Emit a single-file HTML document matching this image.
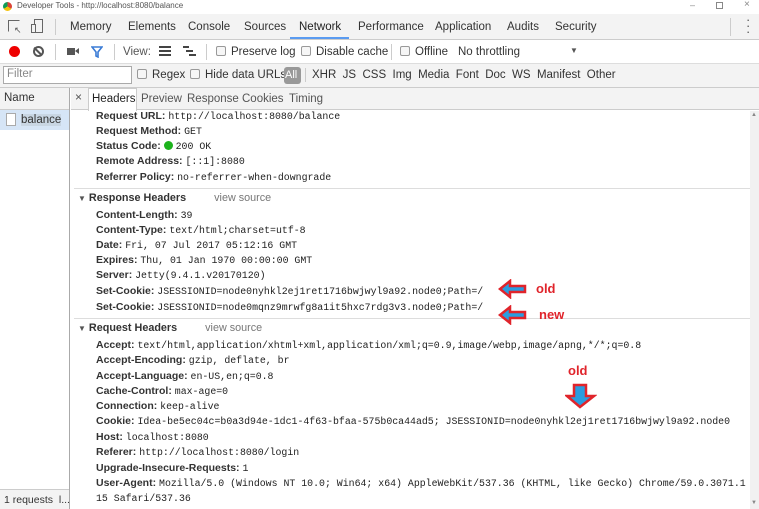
<!DOCTYPE html>
<html><head><meta charset="utf-8"><style>
*{margin:0;padding:0;box-sizing:border-box}
body{width:759px;height:509px;overflow:hidden;background:#fff;font-family:"Liberation Sans",sans-serif;font-size:11px;color:#333;position:relative}
.a{position:absolute;white-space:nowrap}
.bar{position:absolute;left:0;width:759px}
.t{color:#333;font-size:11.5px}
.cb{display:inline-block;width:10px;height:10px;border:1px solid #999;border-radius:2px;background:#f6f6f6;vertical-align:-1px;margin-right:5px}
.l{position:absolute;left:96px;white-space:nowrap;font-size:10.5px;color:#222}
.l b{font-weight:bold;color:#333}
.l span{font-family:"Liberation Mono",monospace;font-size:9.9px;color:#222}
.sec{position:absolute;left:78px;font-weight:bold;font-size:10.8px;color:#333;white-space:nowrap}
.vs{font-weight:normal;color:#777;margin-left:28px}
.hr{position:absolute;left:74px;width:676px;height:1px;background:#ddd}
.red{color:#e0242b;font-weight:bold;font-size:13px;font-family:"Liberation Sans",sans-serif}
</style></head><body>
<div class="bar" style="top:0;height:14px;background:#fff"></div>
<div class="a" style="left:3px;top:2px;width:9px;height:9px;border-radius:50%;background:conic-gradient(#db4437 0 120deg,#f4c20d 0 240deg,#0f9d58 0);"></div>
<div class="a" style="left:17px;top:1px;font-size:8px;color:#555">Developer Tools - http://localhost:8080/balance</div>
<div class="a" style="left:690px;top:0;font-size:9px;color:#888">&#8211;</div>
<div class="a" style="left:716px;top:2px;width:7px;height:7px;border:1px solid #888"></div>
<div class="a" style="left:744px;top:-1px;font-size:10px;color:#888">×</div>
<div class="bar" style="top:14px;height:26px;background:#f3f3f3;border-bottom:1px solid #ccc"></div>
<div class="a" style="left:8px;top:20px;width:12px;height:12px;border:1px solid #666;border-right-color:transparent;border-bottom-color:transparent"></div>
<div class="a" style="left:14px;top:25px;font-size:9px;color:#555">↖</div>
<div class="a" style="left:34px;top:19px;width:9px;height:14px;border:1px solid #666"></div>
<div class="a" style="left:31px;top:24px;width:5px;height:9px;border:1px solid #666;background:#f3f3f3"></div>
<div class="a" style="left:55px;top:19px;width:1px;height:16px;background:#ccc"></div>
<div class="a t" style="left:70px;top:21px">Memory</div>
<div class="a t" style="left:128px;top:21px">Elements</div>
<div class="a t" style="left:188px;top:21px">Console</div>
<div class="a t" style="left:244px;top:21px">Sources</div>
<div class="a t" style="left:299px;top:21px;color:#222">Network</div>
<div class="a" style="left:290px;top:37px;width:59px;height:2px;background:#5a9bf0"></div>
<div class="a t" style="left:358px;top:21px">Performance</div>
<div class="a t" style="left:435px;top:21px">Application</div>
<div class="a t" style="left:507px;top:21px">Audits</div>
<div class="a t" style="left:555px;top:21px">Security</div>
<div class="a" style="left:730px;top:18px;width:1px;height:18px;background:#ccc"></div>
<div class="a" style="left:746px;top:17px;font-size:13px;color:#555;line-height:6px">·<br>·<br>·</div>
<div class="bar" style="top:40px;height:24px;background:#fff;border-bottom:1px solid #ddd"></div>
<div class="a" style="left:9px;top:46px;width:11px;height:11px;border-radius:50%;background:#e00"></div>
<div class="a" style="left:33px;top:46px;width:11px;height:11px;border-radius:50%;border:2px solid #555"></div>
<div class="a" style="left:37px;top:46px;width:2px;height:11px;background:#555;transform:rotate(-45deg)"></div>
<div class="a" style="left:55px;top:44px;width:1px;height:16px;background:#ccc"></div>
<div class="a" style="left:67px;top:48px;width:8px;height:7px;background:#555"></div>
<div class="a" style="left:75px;top:48px;width:0;height:0;border-top:3.5px solid transparent;border-bottom:3.5px solid transparent;border-right:4px solid #555"></div>
<svg class="a" style="left:91px;top:46px" width="12" height="12"><path d="M1 1h10L7 6v5L5 10V6z" fill="none" stroke="#3a7bd5" stroke-width="1.6"/></svg>
<div class="a" style="left:114px;top:44px;width:1px;height:16px;background:#ccc"></div>
<div class="a t" style="left:123px;top:46px;color:#555">View:</div>
<div class="a" style="left:159px;top:46px;width:12px;height:10px;background:repeating-linear-gradient(#444 0 2px,transparent 2px 4px)"></div>
<div class="a" style="left:183px;top:46px;width:13px;height:10px;background:linear-gradient(#444,#444) 0 0/6px 2px no-repeat,linear-gradient(#444,#444) 3px 4px/7px 2px no-repeat,linear-gradient(#444,#444) 6px 8px/7px 2px no-repeat"></div>
<div class="a" style="left:206px;top:44px;width:1px;height:16px;background:#ccc"></div>
<div class="a t" style="left:216px;top:46px"><i class="cb"></i>Preserve log</div>
<div class="a t" style="left:301px;top:46px"><i class="cb"></i>Disable cache</div>
<div class="a" style="left:391px;top:44px;width:1px;height:16px;background:#ccc"></div>
<div class="a t" style="left:400px;top:46px"><i class="cb"></i>Offline</div>
<div class="a t" style="left:458px;top:46px">No throttling</div>
<div class="a" style="left:570px;top:46px;font-size:8px;color:#555">▼</div>
<div class="bar" style="top:64px;height:24px;background:#f3f3f3;border-bottom:1px solid #ccc"></div>
<div class="a" style="left:3px;top:66px;width:129px;height:18px;border:1px solid #aaa;background:#fff;font-size:11.5px;color:#888;padding:1px 3px">Filter</div>
<div class="a t" style="left:137px;top:69px"><i class="cb"></i>Regex</div>
<div class="a t" style="left:190px;top:69px"><i class="cb"></i>Hide data URLs</div>
<div class="a" style="left:284px;top:67px;width:17px;height:17px;border-radius:3px;background:#999;color:#fff;font-size:11px;padding:2px 1px">All</div>
<div class="a" style="left:305px;top:68px;width:1px;height:14px;background:#ccc"></div>
<div class="a t" style="left:312px;top:69px">XHR&nbsp;&nbsp;JS&nbsp;&nbsp;CSS&nbsp;&nbsp;Img&nbsp;&nbsp;Media&nbsp;&nbsp;Font&nbsp;&nbsp;Doc&nbsp;&nbsp;WS&nbsp;&nbsp;Manifest&nbsp;&nbsp;Other</div>
<div class="a" style="left:0;top:88px;width:70px;height:421px;background:#fff;border-right:1px solid #aaa"></div>
<div class="a" style="left:0;top:88px;width:69px;height:22px;background:#f3f3f3;border-bottom:1px solid #ccc"></div>
<div class="a t" style="left:4px;top:92px">Name</div>
<div class="a" style="left:0;top:110px;width:69px;height:20px;background:#d6e5f6"></div>
<div class="a" style="left:6px;top:113px;width:10px;height:13px;border:1px solid #aaa;background:#fff"></div>
<div class="a t" style="left:21px;top:114px;background:#c9d6e3">balance</div>
<div class="a" style="left:0;top:489px;width:69px;height:20px;background:#f3f3f3;border-top:1px solid #ccc"></div>
<div class="a" style="left:4px;top:494px;font-size:10.5px">1 requests &nbsp;l...</div>
<div class="a" style="left:71px;top:88px;width:688px;height:22px;background:#f3f3f3;border-bottom:1px solid #ccc"></div>
<div class="a" style="left:75px;top:90px;font-size:12px;color:#555">×</div>
<div class="a" style="left:88px;top:88px;width:49px;height:23px;background:#fff;border:1px solid #ccc;border-bottom:none"></div>
<div class="a t" style="left:92px;top:93px;color:#222">Headers</div>
<div class="a t" style="left:141px;top:93px;color:#555">Preview</div>
<div class="a t" style="left:187px;top:93px;color:#555">Response</div>
<div class="a t" style="left:242px;top:93px;color:#555">Cookies</div>
<div class="a t" style="left:289px;top:93px;color:#555">Timing</div>
<div class="a" style="left:750px;top:111px;width:9px;height:398px;background:#f1f1f1"></div>
<div class="a" style="left:751px;top:112px;font-size:6px;color:#888">▲</div>
<div class="a" style="left:751px;top:500px;font-size:6px;color:#888">▼</div>
<div class="l" style="top:110px"><b>Request URL:</b> <span>http://localhost:8080/balance</span></div>
<div class="l" style="top:125px"><b>Request Method:</b> <span>GET</span></div>
<div class="l" style="top:140px"><b>Status Code:</b> <i style="display:inline-block;width:9px;height:9px;border-radius:50%;background:#1db31d;vertical-align:-1px"></i> <span>200 OK</span></div>
<div class="l" style="top:155px"><b>Remote Address:</b> <span>[::1]:8080</span></div>
<div class="l" style="top:171px"><b>Referrer Policy:</b> <span>no-referrer-when-downgrade</span></div>
<div class="hr" style="top:188px"></div>
<div class="sec" style="top:192px"><span style="font-size:8px;color:#555">▼</span> Response Headers<span class="vs">view source</span></div>
<div class="l" style="top:209px"><b>Content-Length:</b> <span>39</span></div>
<div class="l" style="top:224px"><b>Content-Type:</b> <span>text/html;charset=utf-8</span></div>
<div class="l" style="top:239px"><b>Date:</b> <span>Fri, 07 Jul 2017 05:12:16 GMT</span></div>
<div class="l" style="top:254px"><b>Expires:</b> <span>Thu, 01 Jan 1970 00:00:00 GMT</span></div>
<div class="l" style="top:269px"><b>Server:</b> <span>Jetty(9.4.1.v20170120)</span></div>
<div class="l" style="top:285px"><b>Set-Cookie:</b> <span>JSESSIONID=node0nyhkl2ej1ret1716bwjwyl9a92.node0;Path=/</span></div>
<div class="l" style="top:301px"><b>Set-Cookie:</b> <span>JSESSIONID=node0mqnz9mrwfg8a1it5hxc7rdg3v3.node0;Path=/</span></div>
<div class="hr" style="top:318px"></div>
<div class="sec" style="top:322px"><span style="font-size:8px;color:#555">▼</span> Request Headers<span class="vs">view source</span></div>
<div class="l" style="top:339px"><b>Accept:</b> <span>text/html,application/xhtml+xml,application/xml;q=0.9,image/webp,image/apng,*/*;q=0.8</span></div>
<div class="l" style="top:354px"><b>Accept-Encoding:</b> <span>gzip, deflate, br</span></div>
<div class="l" style="top:370px"><b>Accept-Language:</b> <span>en-US,en;q=0.8</span></div>
<div class="l" style="top:385px"><b>Cache-Control:</b> <span>max-age=0</span></div>
<div class="l" style="top:400px"><b>Connection:</b> <span>keep-alive</span></div>
<div class="l" style="top:415px"><b>Cookie:</b> <span>Idea-be5ec04c=b0a3d94e-1dc1-4f63-bfaa-575b0ca44ad5; JSESSIONID=node0nyhkl2ej1ret1716bwjwyl9a92.node0</span></div>
<div class="l" style="top:431px"><b>Host:</b> <span>localhost:8080</span></div>
<div class="l" style="top:446px"><b>Referer:</b> <span>http://localhost:8080/login</span></div>
<div class="l" style="top:462px"><b>Upgrade-Insecure-Requests:</b> <span>1</span></div>
<div class="l" style="top:477px"><b>User-Agent:</b> <span>Mozilla/5.0 (Windows NT 10.0; Win64; x64) AppleWebKit/537.36 (KHTML, like Gecko) Chrome/59.0.3071.1</span></div>
<div class="l" style="top:492px"><span>15 Safari/537.36</span></div>
<svg class="a" style="left:498px;top:279px" width="30" height="20"><path d="M2 10L12 2v5h15v6H12v5z" fill="#2a9de0" stroke="#e0242b" stroke-width="2.5"/></svg>
<svg class="a" style="left:498px;top:305px" width="30" height="20"><path d="M2 10L12 2v5h15v6H12v5z" fill="#2a9de0" stroke="#e0242b" stroke-width="2.5"/></svg>
<div class="a red" style="left:536px;top:281px">old</div>
<div class="a red" style="left:539px;top:307px">new</div>
<div class="a red" style="left:568px;top:363px">old</div>
<svg class="a" style="left:565px;top:383px" width="32" height="26"><path d="M9 2h12v11h8L15 24L2 13h7z" fill="#2a9de0" stroke="#e0242b" stroke-width="2.5"/></svg>
</body></html>
